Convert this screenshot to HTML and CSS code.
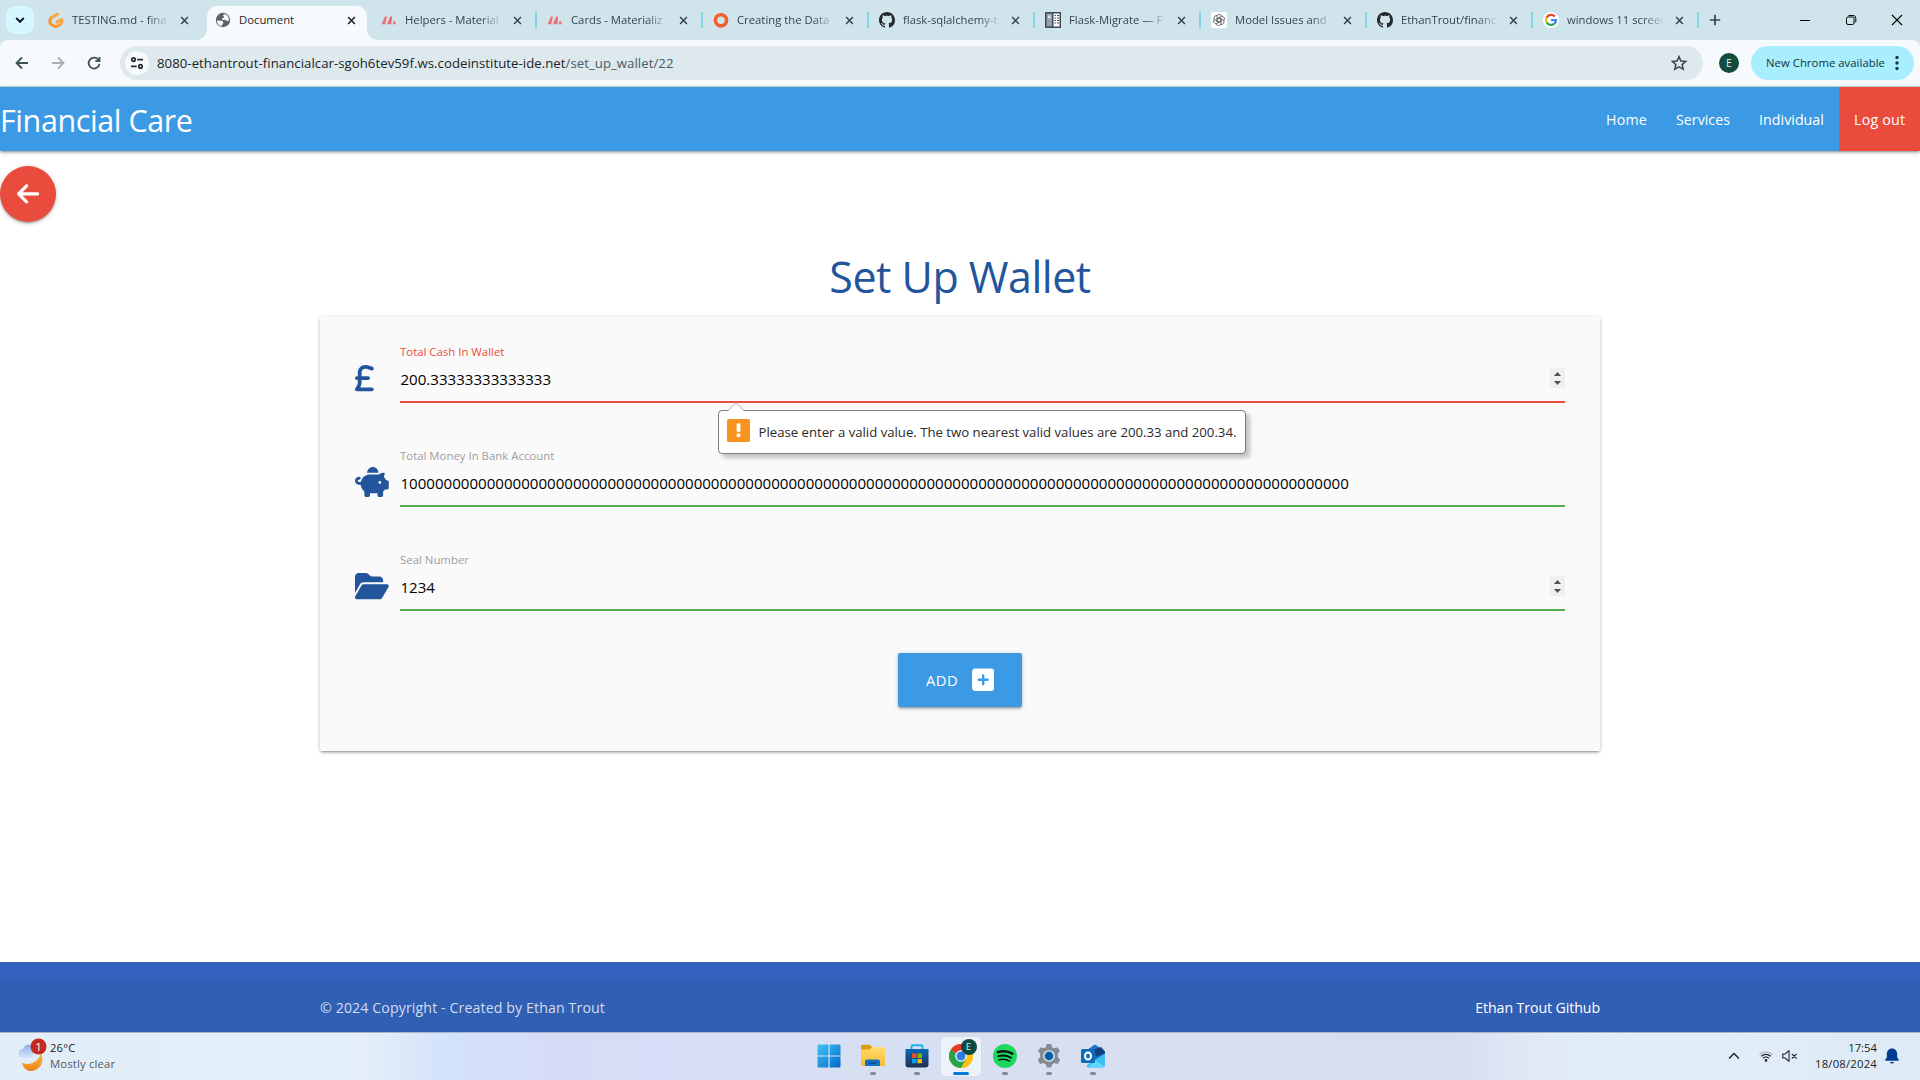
FILE: index.html
```html
<!DOCTYPE html>
<html lang="en">
<head>
<meta charset="utf-8">
<title>Document</title>
<link rel="stylesheet" href="styles.css">
</head>
<body>
<svg class="defs" width="0" height="0" aria-hidden="true">
  <defs>
    <linearGradient id="gitpod" x1="1" y1="0" x2="0" y2="1"><stop offset="0" stop-color="#ffb45b"/><stop offset="1" stop-color="#f98b25"/></linearGradient>
    <linearGradient id="win" x1="0" y1="0" x2="1" y2="1"><stop offset="0" stop-color="#42c4f7"/><stop offset="1" stop-color="#0068c6"/></linearGradient>
    <linearGradient id="folder" x1="0" y1="0" x2="0" y2="1"><stop offset="0" stop-color="#ffdc6a"/><stop offset="1" stop-color="#f8bc34"/></linearGradient>
    <linearGradient id="store" x1="0" y1="0" x2="0" y2="1"><stop offset="0" stop-color="#0a67b8"/><stop offset="1" stop-color="#22304f"/></linearGradient>
    <linearGradient id="moon" x1="0" y1="0" x2="0" y2="1"><stop offset="0" stop-color="#f9bf3b"/><stop offset="1" stop-color="#ee7f1f"/></linearGradient>
    <linearGradient id="cloud" x1="0" y1="0" x2="0" y2="1"><stop offset="0" stop-color="#8eb0ec"/><stop offset="1" stop-color="#d8e6fa"/></linearGradient>
  </defs>
  <symbol id="x" viewBox="0 0 10 10"><path d="M1.2 1.2l7.6 7.6M8.8 1.2L1.2 8.8" fill="none" stroke="currentColor" stroke-width="1.7"/></symbol>
  <symbol id="github" viewBox="0 0 16 16"><path fill="#24292f" d="M8 0C3.58 0 0 3.58 0 8c0 3.54 2.29 6.53 5.47 7.59.4.07.55-.17.55-.38 0-.19-.01-.82-.01-1.49-2.01.37-2.53-.49-2.69-.94-.09-.23-.48-.94-.82-1.13-.28-.15-.68-.52-.01-.53.63-.01 1.08.58 1.23.82.72 1.21 1.87.87 2.33.66.07-.52.28-.87.51-1.07-1.78-.2-3.64-.89-3.64-3.95 0-.87.31-1.59.82-2.15-.08-.2-.36-1.02.08-2.12 0 0 .67-.21 2.2.82.64-.18 1.32-.27 2-.27s1.36.09 2 .27c1.53-1.04 2.2-.82 2.2-.82.44 1.1.16 1.92.08 2.12.51.56.82 1.27.82 2.15 0 3.07-1.87 3.75-3.65 3.95.29.25.54.73.54 1.48 0 1.07-.01 1.93-.01 2.2 0 .21.15.46.55.38A8.01 8.01 0 0016 8c0-4.42-3.58-8-8-8z"/></symbol>
  <symbol id="materialize" viewBox="0 0 16 16"><path d="M.6 12.2L4 4.600h1.900L4.300 12.200zM6 12.200L9.200 4.600h1.900L10.400 12.200zM12 12.200c-.3-1.600.2-3.200 1.200-3.400.9 1 1.600 2.200 1.900 3.400z" fill="#ee6e73"/></symbol>
</svg>

<div class="browser">
  <div class="tabstrip">
    <button class="tab-search"><svg width="10" height="8" viewBox="0 0 10 8"><path d="M1.200 2l3.800 3.800L8.800 2" fill="none" stroke="#111d22" stroke-width="2"/></svg></button>
    <div class="tab first"><svg class="fav" viewBox="0 0 16 16"><path d="M9.700 2.100L3.500 5.600Q2 6.500 2 8v2.500q0 1.300 1.300 2L7 14.300q1 .5 2 0l3.700-2.100q1.100-.7 1.100-2V7.300L9 10" fill="none" stroke="url(#gitpod)" stroke-width="3" stroke-linecap="round" stroke-linejoin="round"/></svg><span class="tab-title">TESTING.md - fina</span><svg class="close"><use href="#x"/></svg></div>
    <div class="tab active"><svg class="fav" viewBox="0 0 16 16"><circle cx="8" cy="8" r="7.200" fill="#5f6368"/><path d="M2 8.500c1.500-.3 2.500.2 4 .3 1.800.2 2.600 1.200 2.200 2.400-.3.900-1.200 1-1.400 2.800C4 13.600 1.900 11.500 2 8.500zM9.500 1.900c-1 .6-1.500 1-1.300 1.900.3.700 1 .6.900 1.400-.2.900-2 .6-2 1.500.1.800 1.300.4 2.200.8.900.400 1.200 1.300 2.400 1.300H14c.3-3.500-1.500-6.200-4.500-6.900z" fill="#f6fafd"/></svg><span class="tab-title">Document</span><svg class="close"><use href="#x"/></svg></div>
    <div class="tab"><svg class="fav"><use href="#materialize"/></svg><span class="tab-title">Helpers - Material</span><svg class="close"><use href="#x"/></svg></div>
    <div class="tab"><svg class="fav"><use href="#materialize"/></svg><span class="tab-title">Cards - Materializ</span><svg class="close"><use href="#x"/></svg></div>
    <div class="tab"><svg class="fav" viewBox="0 0 16 16"><circle cx="8" cy="8.300" r="5.600" fill="none" stroke="#f4602b" stroke-width="3.600"/></svg><span class="tab-title">Creating the Data</span><svg class="close"><use href="#x"/></svg></div>
    <div class="tab"><svg class="fav"><use href="#github"/></svg><span class="tab-title">flask-sqlalchemy-t</span><svg class="close"><use href="#x"/></svg></div>
    <div class="tab"><svg class="fav" viewBox="0 0 16 16"><path d="M0 0h16v16H0z" fill="#3f4a55"/><path d="M1.500 1.500H7v13H1.500z" fill="#91a1ad"/><path d="M8.500 1.500h6v13h-6z" fill="#fff"/><path d="M3 3.500h2.500v3H3z" fill="#dbe3e8"/><path d="M9.500 3.500h1.500M12 3.500h2M9.500 6h1.500M12 6h2M9.500 8.500h1.500M12 8.500h2M9.500 11h1.500M12 11h2" stroke="#46515c" stroke-width="1.200"/></svg><span class="tab-title">Flask-Migrate — F</span><svg class="close"><use href="#x"/></svg></div>
    <div class="tab"><svg class="fav" viewBox="0 0 16 16"><rect width="16" height="16" rx="2" fill="#fff"/><g fill="none" stroke="#444" stroke-width=".8"><path d="M8 5.800L10 7v4.200c0 3-4 3-5 .6"/><path d="M8 5.800L10 7v4.200c0 3-4 3-5 .6" transform="rotate(60 8 8)"/><path d="M8 5.800L10 7v4.200c0 3-4 3-5 .6" transform="rotate(120 8 8)"/><path d="M8 5.800L10 7v4.200c0 3-4 3-5 .6" transform="rotate(180 8 8)"/><path d="M8 5.800L10 7v4.200c0 3-4 3-5 .6" transform="rotate(240 8 8)"/><path d="M8 5.800L10 7v4.200c0 3-4 3-5 .6" transform="rotate(300 8 8)"/></g></svg><span class="tab-title">Model Issues and</span><svg class="close"><use href="#x"/></svg></div>
    <div class="tab"><svg class="fav"><use href="#github"/></svg><span class="tab-title">EthanTrout/financ</span><svg class="close"><use href="#x"/></svg></div>
    <div class="tab"><svg class="fav" viewBox="0 0 16 16"><circle cx="8" cy="8" r="8" fill="#fff"/><g fill="none" stroke-width="2.300"><path d="M11.900 4.600A5 5 0 0 0 3.600 5.700" stroke="#ea4335"/><path d="M3.600 5.600a5 5 0 0 0 0 4.800" stroke="#fbbc05"/><path d="M3.600 10.300a5 5 0 0 0 7.700 1.400" stroke="#34a853"/><path d="M8 8.200h5a5 5 0 0 1-1.700 3.600" stroke="#4285f4"/></g></svg><span class="tab-title">windows 11 screen</span><svg class="close"><use href="#x"/></svg></div>
    <svg class="new-tab" width="12" height="12" viewBox="0 0 12 12"><path d="M6 .8v10.400M.8 6h10.400" stroke="#33454b" stroke-width="1.700"/></svg>
    <div class="window-controls">
      <svg width="12" height="12" viewBox="0 0 12 12"><path d="M1 6.500h10" stroke="#000"/></svg>
      <svg width="12" height="12" viewBox="0 0 12 12"><rect x="1.500" y="3" width="7.500" height="7.500" rx="1.500" fill="none" stroke="#000"/><path d="M3.500 1.500h4.500q2.800 0 2.800 2.800v4.200" fill="none" stroke="#000"/></svg>
      <svg width="12" height="12" viewBox="0 0 12 12"><path d="M1 1l10 10M11 1L1 11" stroke="#000" stroke-width="1.100"/></svg>
    </div>
  </div>

  <div class="toolbar">
    <div class="nav-buttons">
      <svg width="16" height="16" viewBox="0 0 16 16"><path d="M14 8H3M8 2.500L2.500 8 8 13.500" fill="none" stroke="#3c5056" stroke-width="1.800"/></svg>
      <svg width="16" height="16" viewBox="0 0 16 16"><path d="M2 8h11M8 2.500L13.500 8 8 13.500" fill="none" stroke="#a3afb3" stroke-width="1.800"/></svg>
      <svg width="16" height="16" viewBox="0 0 16 16"><path d="M12.600 5.200A5.400 5.400 0 1 0 13.400 8.800M13.500 2v4.200H9.300" fill="none" stroke="#3c5056" stroke-width="1.800"/></svg>
    </div>
    <div class="omnibox">
      <span class="site-info"><svg width="14" height="14" viewBox="0 0 14 14"><g fill="none" stroke="#1f2a2e" stroke-width="1.700"><circle cx="3.500" cy="3.600" r="1.700"/><path d="M7.300 3.600H13M1 10.400h5.700"/><circle cx="10.500" cy="10.400" r="1.700"/></g></svg></span>
      <span class="url">8080-ethantrout-financialcar-sgoh6tev59f.ws.codeinstitute-ide.net<span class="path">/set_up_wallet/22</span></span>
      <svg class="star" width="16" height="16" viewBox="0 0 16 16"><path d="M8 1.600l1.900 4.400 4.800.4-3.600 3.200 1.100 4.700L8 11.800l-4.200 2.500 1.100-4.700L1.300 6.400l4.800-.4z" fill="none" stroke="#3c464a" stroke-width="1.500"/></svg>
    </div>
    <span class="profile">E</span>
    <span class="update">New Chrome available<svg width="4" height="16" viewBox="0 0 4 16"><g fill="#1b3a42"><circle cx="2" cy="2.500" r="1.700"/><circle cx="2" cy="8" r="1.700"/><circle cx="2" cy="13.500" r="1.700"/></g></svg></span>
  </div>
</div>

<nav class="navbar">
  <a class="brand">Financial Care</a>
  <a class="link home">Home</a>
  <a class="link services">Services</a>
  <a class="link individual">Individual</a>
  <a class="link logout">Log out</a>
</nav>

<main>
  <a class="back"><svg width="22.400" height="25.600" viewBox="0 0 448 512"><path fill="#fff" d="M9.400 233.400c-12.500 12.500-12.500 32.800 0 45.300l160 160c12.500 12.500 32.800 12.500 45.300 0s12.500-32.800 0-45.300L109.200 288 416 288c17.700 0 32-14.300 32-32s-14.300-32-32-32l-306.700 0L214.600 118.600c12.500-12.500 12.500-32.800 0-45.300s-32.800-12.500-45.300 0l-160 160z"/></svg></a>
  <h1>Set Up Wallet</h1>
  <form class="card">
    <div class="field invalid">
      <svg class="icon" width="18.750" height="30" viewBox="0 0 320 512"><path d="M112 160.400c0-35.500 28.800-64.400 64.400-64.400c6.900 0 13.800 1.100 20.400 3.300l81.200 27.100c16.800 5.600 34.900-3.500 40.500-20.200s-3.500-34.900-20.200-40.500L217 38.600c-13.100-4.400-26.800-6.600-40.600-6.600C105.500 32 48 89.500 48 160.400V224H32c-17.700 0-32 14.300-32 32s14.300 32 32 32H48v44.500c0 17.400-4.700 34.500-13.700 49.400L4.600 431.500c-5.900 9.900-6.100 22.200-.4 32.200S20.500 480 32 480H288c17.700 0 32-14.300 32-32s-14.300-32-32-32H88.500l.7-1.100C104.100 390 112 361.500 112 332.500V288H224c17.700 0 32-14.300 32-32s-14.300-32-32-32H112V160.400z"/></svg>
      <div class="control"><label>Total Cash In Wallet</label><div class="value"><span>200.33333333333333</span><svg class="spinner" width="15" height="20" viewBox="0 0 15 20"><path d="M0 0h15v20H0z" fill="#f0f0f0"/><path d="M4 8l3.500-4L11 8zM4 13l3.500 4 3.500-4z" fill="#505050"/></svg></div></div>
      <div class="bubble"><svg class="pointer" width="18" height="9" viewBox="0 0 18 9"><path d="M1 9L9 1l8 8z" fill="#fff"/><path d="M1 8.500L9 .8l8 7.700" fill="none" stroke="#aaa"/></svg><svg width="23" height="23" viewBox="0 0 23 23"><rect width="23" height="23" rx="1.500" fill="#f7931e"/><path d="M9.600 4.500h3.800v8.200H9.600z" fill="#fff"/><circle cx="11.500" cy="16.300" r="2" fill="#fff"/></svg><span>Please enter a valid value. The two nearest valid values are 200.33 and 200.34.</span></div>
    </div>
    <div class="field">
      <svg class="icon" width="33.750" height="30" viewBox="0 0 576 512"><path d="M400 96l0 .7c-5.300-.4-10.600-.7-16-.7H256c-16.500 0-32.500 2.100-47.800 6c-.1-2-.2-4-.2-6c0-53 43-96 96-96s96 43 96 96zm-16 32c3.500 0 7 .1 10.400 .3c4.200 .3 8.400 .7 12.600 1.300C424.600 109.100 450.800 96 480 96h11.500c10.400 0 18 9.800 15.500 19.900l-13.800 55.200c15.800 14.800 28.700 32.800 37.500 52.900H544c17.700 0 32 14.300 32 32v96c0 17.700-14.300 32-32 32H512c-9.100 12.100-19.900 22.900-32 32v64c0 17.700-14.300 32-32 32H416c-17.700 0-32-14.300-32-32V448H256v32c0 17.700-14.300 32-32 32H192c-17.700 0-32-14.300-32-32V416c-34.900-26.200-58.700-66.300-63.200-112H68c-37.600 0-68-30.400-68-68s30.400-68 68-68h4c13.300 0 24 10.700 24 24s-10.700 24-24 24H68c-11 0-20 9-20 20s9 20 20 20H99.200c12.100-59.800 57.700-107.500 116.300-122.800c12.900-3.400 26.500-5.200 40.500-5.200H384zm64 136a24 24 0 1 0 -48 0 24 24 0 1 0 48 0z"/></svg>
      <div class="control"><label>Total Money In Bank Account</label><div class="value"><span>10000000000000000000000000000000000000000000000000000000000000000000000000000000000000000000000000000000000000</span></div></div>
    </div>
    <div class="field">
      <svg class="icon" width="33.750" height="30" viewBox="0 0 576 512"><path d="M88.700 223.800L0 375.800V96C0 60.700 28.700 32 64 32H181.500c17 0 33.300 6.700 45.300 18.700l26.500 26.500c12 12 28.300 18.700 45.300 18.700H416c35.300 0 64 28.700 64 64v32H144c-22.800 0-43.800 12.100-55.300 31.800zm27.600 16.100C122.100 230 132.600 224 144 224H544c11.500 0 22 6.100 27.700 16.100s5.700 22.200-.1 32.100l-112 192C453.900 474 443.400 480 432 480H32c-11.500 0-22-6.100-27.700-16.100s-5.700-22.200 .1-32.100l112-192z"/></svg>
      <div class="control"><label>Seal Number</label><div class="value"><span>1234</span><svg class="spinner" width="15" height="20" viewBox="0 0 15 20"><path d="M0 0h15v20H0z" fill="#f0f0f0"/><path d="M4 8l3.500-4L11 8zM4 13l3.500 4 3.500-4z" fill="#505050"/></svg></div></div>
    </div>
    <button class="add" type="button">ADD<svg width="22.400" height="25.600" viewBox="0 0 448 512"><path fill="#fff" d="M64 32C28.700 32 0 60.700 0 96V416c0 35.300 28.700 64 64 64H384c35.300 0 64-28.700 64-64V96c0-35.300-28.700-64-64-64H64zM200 344V280H136c-13.300 0-24-10.700-24-24s10.700-24 24-24h64V168c0-13.300 10.700-24 24-24s24 10.700 24 24v64h64c13.300 0 24 10.700 24 24s-10.700 24-24 24H248v64c0 13.300-10.700 24-24 24s-24-10.700-24-24z"/></svg></button>
  </form>
</main>

<footer>
  <div class="footer-row"><span class="copyright">© 2024 Copyright - Created by Ethan Trout</span><a class="github">Ethan Trout Github</a></div>
</footer>

<div class="taskbar">
  <div class="weather">
    <svg width="32" height="36" viewBox="0 0 32 36"><path d="M23 15c4 9-1 17-9 18-5 .4-9-3-10-8 9 3 16-1 19-10z" fill="url(#moon)"/><path d="M5 20a4.500 4.500 0 0 1 0-9 5.500 5.500 0 0 1 10-2v11z" fill="url(#cloud)"/><circle cx="20.500" cy="8.500" r="8" fill="#c42b1c"/><text x="20.500" y="12.800" class="badge-text">1</text></svg>
    <div><div class="temp">26°C</div><div class="sky">Mostly clear</div></div>
  </div>
  <div class="apps">
    <div class="app"><svg viewBox="0 0 24 24"><path d="M.5 1.500Q.5.500 1.500.500h9.900v10.900H.5zM12.600.5h9.900q1 0 1 1v9.900H12.600zM.5 12.600h10.900v10.900H1.500q-1 0-1-1zM12.600 12.600h10.900v9.900q0 1-1 1h-9.900z" fill="url(#win)"/></svg></div>
    <div class="app open"><svg viewBox="0 0 24 24"><path d="M0 2.500Q0 .8 1.700.8h7.200L12 4.500H22.500Q24 4.500 24 6v16H0z" fill="#e09a10"/><path d="M0 5.500h8.500l3-2.500h11Q24 3 24 4.500V22H0z" fill="url(#folder)"/><path d="M4 22v-4.500Q4 15.500 6 15.500h11q2 0 2 2V22z" fill="#1273c4"/><path d="M7.500 19h8" stroke="#0b4d91" stroke-width="1.500"/></svg></div>
    <div class="app open"><svg viewBox="0 0 24 24"><path d="M6.500 7V2.500q0-1.300 1.300-1.300h8.400q1.300 0 1.300 1.300V7" fill="none" stroke="#1fb1ee" stroke-width="2"/><path d="M.5 5h23v15.500q0 3-3 3h-17q-3 0-3-3z" fill="url(#store)"/><path d="M7 9.500h4.500V14H7z" fill="#f25022"/><path d="M12.500 9.500H17V14h-4.500z" fill="#7fba00"/><path d="M7 15h4.500v4.200H7z" fill="#00a4ef"/><path d="M12.500 15H17v4.200h-4.500z" fill="#ffb900"/></svg></div>
    <div class="app open current"><svg viewBox="0 0 24 24"><circle cx="12" cy="12" r="12" fill="#fbc116"/><path d="M12 12L1.600 6A12 12 0 0 1 22.400 6z" fill="#e33b2e"/><path d="M12 12L1.600 6A12 12 0 0 0 12 24l5.500-9z" fill="#2ba24c"/><path d="M12 6h10.400A12 12 0 0 1 12 24l5.200-9z" fill="#fbc116"/><circle cx="12" cy="12" r="5.800" fill="#fff"/><circle cx="12" cy="12" r="4.500" fill="#2b7de9"/></svg><span class="app-badge">E</span></div>
    <div class="app open"><svg viewBox="0 0 24 24"><circle cx="12" cy="12" r="12" fill="#1ed760"/><g fill="none" stroke="#08130b" stroke-linecap="round"><path d="M4.800 8.200c5-1.500 10.500-1 14.700 1.500" stroke-width="2.300"/><path d="M5.400 12.200c4.200-1.200 8.900-.7 12.700 1.500" stroke-width="1.900"/><path d="M6 15.900c3.600-1 7.400-.6 10.700 1.300" stroke-width="1.500"/></g></svg></div>
    <div class="app open"><svg viewBox="0 0 24 24"><path d="M9.800 0h4.400l.9 3.200 2 1 3.200-.9 2.600 3.800-2 2.600v3.600l2.300 2.500-2.300 4.200-3.500-.9-2.300 1.300-.9 3.100H9.800l-.9-3.100-2.300-1.300-3.500.9L.8 15.800l2.300-2.500V9.700l-2-2.600 2.600-3.800 3.200.9 2-1z" fill="#848b92"/><circle cx="12" cy="12" r="5.800" fill="#e5edf3"/><circle cx="12" cy="12" r="4.400" fill="#0c5da8"/></svg></div>
    <div class="app open"><svg viewBox="0 0 24 24"><path d="M4 7.500L13 1q1-.7 2 0l9 6.500v6L13 20 4 14z" fill="#1a76cc"/><path d="M13 5.500L20 3l4 4.500v2L15 13z" fill="#123f7e"/><path d="M6 21L24 9.500V21q0 2.500-2.500 2.500H8q-2.500 0-2.500-2z" fill="#38c0f2"/><path d="M14 16l9.500 6.500q-.7 1-2 1H8z" fill="#62d6f8"/><rect y="5" width="14" height="14" rx="1.500" fill="#0f6cbd"/><ellipse cx="7" cy="12" rx="3" ry="3.500" fill="none" stroke="#fff" stroke-width="2"/></svg></div>
  </div>
  <div class="tray">
    <svg class="chevron" width="12" height="12" viewBox="0 0 12 12"><path d="M1 8.500L6 3.500l5 5" fill="none" stroke="#222" stroke-width="1.400"/></svg>
    <svg class="wifi" width="14" height="12" viewBox="0 0 14 12"><g fill="none" stroke="#222" stroke-width="1.200"><path d="M.5 4.500a9.200 9.200 0 0 1 13 0" stroke="#b3b8bc"/><path d="M2.300 6.300a6.700 6.700 0 0 1 9.400 0M4.200 8.300a4 4 0 0 1 5.600 0"/></g><circle cx="7" cy="10.400" r="1.300" fill="#222"/></svg>
    <svg class="speaker" width="16" height="12" viewBox="0 0 16 12"><path d="M.8 4v4h2.400L7 11.300V.7L3.200 4zM9.800 3.800l4.700 4.700M14.500 3.800L9.800 8.500" fill="none" stroke="#222" stroke-width="1.100"/></svg>
    <div class="clock"><div>17:54</div><div class="date">18/08/2024</div></div>
    <svg class="bell" width="14" height="16" viewBox="0 0 14 16"><path d="M7 .5c3.300 0 5.200 2.500 5.200 5.500v3.500l1.600 2.300q.3 1-.7 1H.9q-1 0-.7-1l1.600-2.300V6C1.800 3 3.700.5 7 .5zM4.800 14h4.400q-.7 1.600-2.200 1.600T4.800 14z" fill="#003e92"/></svg>
  </div>
</div>
</body>
</html>
```
FILE: styles.css
```css
* { box-sizing: border-box; }

body {
  margin: 0;
  width: 1920px;
  height: 1080px;
  overflow: hidden;
  display: flex;
  flex-direction: column;
  background: #fff;
  font-family: "Open Sans", "Noto Sans", sans-serif;
  font-size: 14.2px;
}

svg { display: block; flex: none; }
.defs { position: absolute; }
button { border: 0; padding: 0; font: inherit; }

/* Browser window */
.browser { background: #d0e5eb; height: 87px; flex: none; }

.tabstrip { display: flex; height: 40px; align-items: center; color: #33454b; font-size: 11.3px; }

.tab-search {
  display: flex;
  align-items: center;
  justify-content: center;
  width: 28px;
  height: 28px;
  margin: 0 4px 0 6px;
  border-radius: 9px;
  background: #d5f6fe;
}

.tab {
  position: relative;
  display: flex;
  align-items: center;
  width: 166px;
  height: 34px;
  padding-left: 10px;
}
.tab::after {
  content: "";
  position: absolute;
  right: 0;
  top: 9px;
  width: 2px;
  height: 16px;
  background: #86d3e6;
}
.tab.first { width: 169px; }
.tab.first::after, .tab.active::after { display: none; }
.tab.active {
  width: 160px;
  margin: 6px 4px 0 0;
  padding-left: 8px;
  padding-bottom: 6px;
  border-radius: 10px 10px 0 0;
  background: #f6fafd;
  color: #1b2528;
}
.tab.active::before {
  content: "";
  position: absolute;
  left: -10px;
  right: -10px;
  bottom: 0;
  height: 10px;
  background:
    radial-gradient(circle at 0 0, transparent 9.5px, #f6fafd 10px) 0 0 / 10px 10px no-repeat,
    radial-gradient(circle at 100% 0, transparent 9.5px, #f6fafd 10px) 100% 0 / 10px 10px no-repeat;
}
.fav { width: 16px; height: 16px; margin-right: 8px; }
.tab-title {
  width: 99px;
  white-space: nowrap;
  line-height: 20px;
  -webkit-mask-image: linear-gradient(90deg, #000 76px, transparent 98px);
  mask-image: linear-gradient(90deg, #000 76px, transparent 98px);
}
.tab.active .tab-title { -webkit-mask-image: none; mask-image: none; }
.close { width: 9px; height: 9px; margin-left: 8.5px; }
.new-tab { margin-left: 10px; }

.window-controls { display: flex; gap: 34px; margin: 0 17px 0 auto; }

.toolbar {
  display: flex;
  align-items: center;
  height: 47px;
  padding-bottom: 1px;
  background: #f6fafd;
  border-radius: 8px 8px 0 0;
  border-bottom: 1px solid #cfd9dd;
}
.nav-buttons { display: flex; gap: 20px; padding-left: 14px; }
.omnibox {
  display: flex;
  align-items: center;
  width: 1583px;
  height: 34px;
  margin-left: 18px;
  padding-left: 5px;
  border-radius: 17px;
  background: #dde9ed;
}
.site-info {
  display: flex;
  align-items: center;
  justify-content: center;
  width: 24px;
  height: 24px;
  border-radius: 50%;
  background: #f6fafd;
}
.url { margin-left: 8px; font-size: 13.2px; letter-spacing: 0.045px; color: #1a2427; }
.path { color: #4c5a5f; }
.star { margin: 0 16px 0 auto; }
.profile {
  width: 20px;
  height: 20px;
  margin-left: 16px;
  border-radius: 50%;
  background: #114c3f;
  color: #e2efea;
  font-size: 10.5px;
  line-height: 20px;
  text-align: center;
}
.update {
  display: flex;
  align-items: center;
  width: 163px;
  height: 34px;
  margin-left: 12px;
  padding-left: 15px;
  gap: 10px;
  border-radius: 17px;
  background: #a9eefe;
  color: #12343c;
  font-size: 11.3px;
  letter-spacing: 0.048px;
  white-space: nowrap;
}

/* Site navigation */
.navbar {
  position: relative;
  display: flex;
  flex: none;
  height: 64px;
  line-height: 66px;
  background: #3c99e4;
  color: #fff;
  box-shadow: 0 2px 2px 0 rgba(0,0,0,.14), 0 3px 1px -2px rgba(0,0,0,.12), 0 1px 5px 0 rgba(0,0,0,.2);
}
.brand { margin-right: auto; font-size: 30.5px; letter-spacing: -0.42px; }
.link { height: 64px; padding: 0 15px; white-space: nowrap; }
.home { width: 70px; letter-spacing: .2px; }
.services { width: 83px; letter-spacing: .03px; }
.individual { width: 95px; letter-spacing: .05px; }
.logout { width: 81px; background: #e94c3c; letter-spacing: .24px; }

/* Page */
main { flex: 1; display: flex; flex-direction: column; padding-top: 15px; }
.back {
  display: flex;
  align-items: center;
  justify-content: center;
  flex: none;
  width: 56px;
  height: 56px;
  border-radius: 50%;
  background: #e94c3c;
  box-shadow: 0 2px 2px 0 rgba(0,0,0,.14), 0 3px 1px -2px rgba(0,0,0,.12), 0 1px 5px 0 rgba(0,0,0,.2);
}
h1 {
  margin: 25px 0 10px;
  height: 60px;
  line-height: 60px;
  text-align: center;
  font-weight: 400;
  font-size: 43px;
  letter-spacing: -0.5px;
  color: #22559c;
}
.card {
  width: 1280px;
  height: 434px;
  margin: 0 auto;
  padding: 24px 35px 0;
  border-radius: 2px;
  background: #fafafa;
  box-shadow: 0 2px 2px 0 rgba(0,0,0,.14), 0 3px 1px -2px rgba(0,0,0,.12), 0 1px 5px 0 rgba(0,0,0,.2);
}
.field { position: relative; display: flex; height: 104px; }
.icon { margin-top: 22px; fill: #22559c; }
.control { width: 1165px; margin-left: auto; }
.control label { display: block; height: 20px; line-height: 21px; font-size: 11.4px; color: #9e9e9e; }
.invalid .control label { color: #e94c3c; }
.value {
  display: flex;
  align-items: center;
  justify-content: space-between;
  height: 42px;
  padding: 0 0 4px .5px;
  border-bottom: 2px solid #54ae50;
  font-size: 15.09px;
  color: #000;
}
.invalid .value { border-color: #e94c3c; }
.spinner { margin-top: -2px; }

.bubble {
  position: absolute;
  left: 363px;
  top: 69px;
  z-index: 2;
  display: flex;
  width: 528px;
  height: 44px;
  padding: 8px 0 0 8px;
  border: 1px solid #7d7d7d;
  border-radius: 4px;
  background: #fff;
  box-shadow: 4px 4px 4px rgba(0,0,0,.22);
  font-size: 13.2px;
  letter-spacing: -.01px;
  line-height: 27px;
  color: #2a2a2a;
  white-space: nowrap;
}
.bubble span { margin-left: 8.5px; }
.pointer { position: absolute; left: 8px; top: -9px; }

.add {
  display: flex;
  align-items: center;
  width: 124px;
  height: 54px;
  margin: 0 auto;
  padding-left: 28px;
  gap: 14px;
  border-radius: 2px;
  background: #3c99e4;
  color: #fff;
  font-size: 14.8px;
  letter-spacing: .4px;
  box-shadow: 0 2px 2px 0 rgba(0,0,0,.14), 0 3px 1px -2px rgba(0,0,0,.12), 0 1px 5px 0 rgba(0,0,0,.2);
}

footer { flex: none; height: 70px; padding-top: 20px; background: #3262be; }
.footer-row {
  display: flex;
  justify-content: space-between;
  height: 50px;
  padding: 0 320px;
  line-height: 51px;
  background: #305fb3;
  color: #d3dcee;
}
.copyright { letter-spacing: .099px; }
.github { color: #fff; letter-spacing: -.1px; }

/* Taskbar */
.taskbar {
  display: grid;
  grid-template-columns: 1fr auto 1fr;
  flex: none;
  height: 48px;
  border-top: 1px solid #a9b4c8;
  background: linear-gradient(90deg, #e1eef8 0, #e3eef8 370px, #d3e2fb 450px, #d8dbf5 570px, #d7e0f8 720px, #d7dff3 850px, #d9dff0 1100px, #d7deef 1450px, #e0ebf6 1540px, #e1eef9 1700px, #deebf7 1920px);
  color: #1c1c1c;
  font-size: 11.3px;
}
.weather { display: flex; padding: 5px 0 0 18px; line-height: 16px; }
.weather > div { padding-top: 2px; }
.badge-text { fill: #fff; font-size: 11.5px; text-anchor: middle; }
.temp { letter-spacing: .15px; }
.sky { letter-spacing: .17px; color: #55595d; }

.apps { display: flex; gap: 4px; padding-top: 4px; margin-left: 1px; }
.app {
  position: relative;
  display: flex;
  justify-content: center;
  width: 40px;
  height: 39px;
  padding-top: 7px;
}
.app svg { width: 24px; height: 24px; }
.open::after {
  content: "";
  position: absolute;
  left: 17px;
  bottom: 1px;
  width: 6px;
  height: 3px;
  border-radius: 2px;
  background: #858990;
}
.current { border-radius: 4px; background: #edf1fa; box-shadow: 0 0 1px #b9bfd0; }
.current::after { left: 12px; width: 16px; background: #0078d4; }
.app-badge {
  position: absolute;
  left: 20px;
  top: 2px;
  width: 16px;
  height: 16px;
  border-radius: 50%;
  background: #0b4c40;
  color: #dcebe6;
  font-size: 9.5px;
  line-height: 16px;
  text-align: center;
}

.tray { display: flex; justify-content: flex-end; align-items: center; padding: 0 21px 1px 0; }
.wifi { margin-left: 19px; }
.speaker { margin-left: 9px; }
.clock { width: 79px; text-align: right; line-height: 16px; }
.date { letter-spacing: .2px; }
.bell { margin-left: 8px; }
```
